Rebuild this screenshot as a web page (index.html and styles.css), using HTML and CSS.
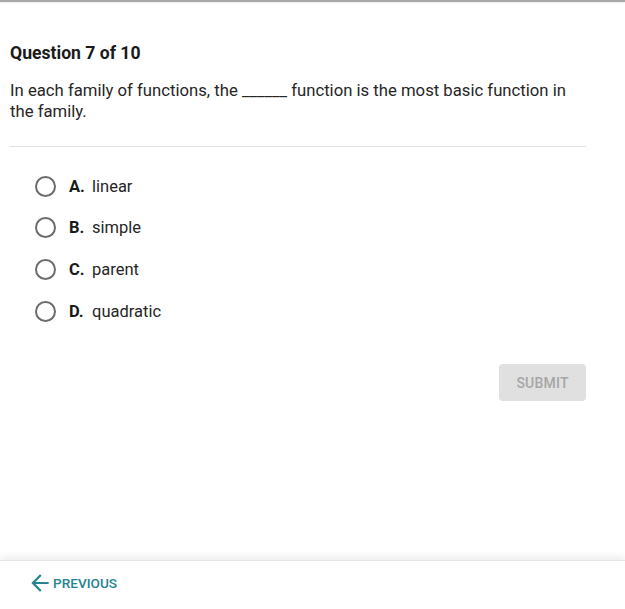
FILE: index.html
```html
<!DOCTYPE html>
<html>
<head>
<meta charset="utf-8">
<link rel="stylesheet" href="styles.css">
</head>
<body>
<div class="page">
  <div class="topline"></div>
  <main class="content">
    <h1 class="qtitle">Question 7 of 10</h1>
    <p class="qtext">In each family of functions, the ______ function is the most basic function in the family.</p>
    <hr class="divider">
    <ul class="options">
      <li class="option"><span class="radio"></span><span class="letter">A.</span><span class="answer">linear</span></li>
      <li class="option"><span class="radio"></span><span class="letter">B.</span><span class="answer">simple</span></li>
      <li class="option"><span class="radio"></span><span class="letter">C.</span><span class="answer">parent</span></li>
      <li class="option"><span class="radio"></span><span class="letter">D.</span><span class="answer">quadratic</span></li>
    </ul>
    <div class="actions"><button class="submit" disabled>SUBMIT</button></div>
  </main>
  <footer class="footer">
    <a class="prev">
      <svg class="arrow" width="26" height="26" viewBox="0 0 24 24"><path d="M20 11H7.83l5.59-5.59L12 4l-8 8 8 8 1.41-1.41L7.83 13H20v-2z" fill="currentColor"/></svg>
      <span>PREVIOUS</span>
    </a>
  </footer>
</div>
</body>
</html>
```

FILE: styles.css
```css
* { box-sizing: border-box; }
html, body { margin: 0; padding: 0; background: #fff; }
body { font-family: Roboto, "Liberation Sans", sans-serif; color: #212121; }
.page { height: 609px; display: flex; flex-direction: column; }
.topline { height: 2px; background: #a8a8a8; box-shadow: 0 1px 2px rgba(0,0,0,0.08); }
.content { flex: 1; padding: 0 39px 0 10px; }
.qtitle { margin: 40px 0 0; font-size: 17.6px; font-weight: 700; line-height: 22px; color: #1a1a1a; }
.qtext { margin: 16px 0 0; font-size: 16.7px; line-height: 21px; color: #262626; }
.divider { margin: 24px 0 0; border: 0; border-top: 1px solid #e0e0e0; height: 0; }
.options { list-style: none; margin: 28px 0 0; padding: 0 0 0 25px; display: flex; flex-direction: column; gap: 19.7px; }
.option { display: flex; align-items: center; height: 22px; font-size: 16.5px; color: #262626; }
.radio { width: 21px; height: 21px; border: 2px solid #6b6b6b; border-radius: 50%; margin-right: 13px; }
.letter { font-weight: 700; width: 23px; color: #1a1a1a; }
.actions { display: flex; justify-content: flex-end; margin-top: 42px; }
.submit { width: 87px; height: 37px; border: 0; border-radius: 4px; background: #e0e0e0; color: #a6a6a6; font-family: Roboto, sans-serif; font-size: 14px; font-weight: 500; letter-spacing: 0.2px; }
.footer { height: 49px; border-top: 1px solid #e6e6e6; box-shadow: 0 -3px 8px rgba(0,0,0,0.08); display: flex; align-items: center; padding-left: 27px; padding-bottom: 4px; }
.prev { display: flex; align-items: center; color: #26848f; font-size: 13.6px; font-weight: 500; }
.arrow { display: block; }
```
